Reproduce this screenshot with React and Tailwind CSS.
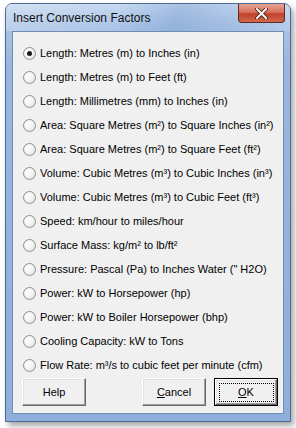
import React, { useState } from "react";

const options = [
  "Length: Metres (m) to Inches (in)",
  "Length: Metres (m) to Feet (ft)",
  "Length: Millimetres (mm) to Inches (in)",
  "Area: Square Metres (m²) to Square Inches (in²)",
  "Area: Square Metres (m²) to Square Feet (ft²)",
  "Volume: Cubic Metres (m³) to Cubic Inches (in³)",
  "Volume: Cubic Metres (m³) to Cubic Feet (ft³)",
  "Speed: km/hour to miles/hour",
  "Surface Mass: kg/m² to lb/ft²",
  "Pressure: Pascal (Pa) to Inches Water (\" H2O)",
  "Power: kW to Horsepower (hp)",
  "Power: kW to Boiler Horsepower (bhp)",
  "Cooling Capacity: kW to Tons",
  "Flow Rate: m³/s to cubic feet per minute (cfm)",
];

// classic style radio bullet
const Radio = ({ checked }) => (
  <span className="relative flex h-[13px] w-[13px] shrink-0 items-center justify-center rounded-full border border-[#8e8f8f] bg-[radial-gradient(circle_at_35%_35%,#ffffff_0%,#f4f4f4_45%,#d8d8d8_100%)]">
    {checked && <span className="h-[5px] w-[5px] rounded-full bg-[#1a1a1a]" />}
  </span>
);

// 3d classic push button
const Button = ({ children, isDefault }) => {
  const face = (
    <span className="flex h-full w-full items-center justify-center border border-b-[#696969] border-l-[#ffffff] border-r-[#696969] border-t-[#ffffff] bg-[#f0f0f0] shadow-[inset_-1px_-1px_0_#a0a0a0,inset_1px_1px_0_#e3e3e3]">
      {isDefault ? (
        <span className="flex h-[19px] w-[55px] items-center justify-center border border-dotted border-black">
          {children}
        </span>
      ) : (
        children
      )}
    </span>
  );
  return (
    <button
      className={`flex h-[28px] w-[64px] text-[11px] text-black ${
        isDefault ? "border border-black" : ""
      }`}
    >
      {face}
    </button>
  );
};

export default function App() {
  const [selected, setSelected] = useState(0);

  return (
    <div
      className="h-[428px] w-[296px] overflow-hidden bg-white pl-[5px] pt-[3px]"
      style={{ fontFamily: '"Liberation Sans", Arial, sans-serif' }}
    >
      <div className="flex h-[419px] w-[286px] flex-col rounded-t-[7px] border border-[#4b6a93] bg-[linear-gradient(180deg,#c3d7ef_0px,#a9c3e6_20px,#9ab6de_60px,#8eaedb_100%)] shadow-[3px_4px_6px_rgba(0,0,0,0.35)]">
        {/* title bar */}
        <div className="flex h-[27px] shrink-0 items-start justify-between bg-[linear-gradient(100deg,rgba(255,255,255,0.25)_0%,rgba(255,255,255,0.05)_40%,rgba(90,130,190,0.25)_60%,rgba(255,255,255,0.15)_100%)] pl-[7px] pr-[5px]">
          <span className="pt-[7px] text-[12px] leading-[14px] text-[#111]">
            Insert Conversion Factors
          </span>
          <div className="flex h-[19px] w-[47px] items-center justify-center rounded-b-[4px] border border-t-0 border-[#5d2a25] bg-[linear-gradient(#e8a493_0%,#d7725d_45%,#c2402a_55%,#d06a4f_100%)]">
            <svg width="13" height="11" viewBox="0 0 13 11">
              <path
                d="M2 1 L11 10 M11 1 L2 10"
                stroke="#3a1a14"
                strokeWidth="3.6"
                strokeLinecap="square"
              />
              <path
                d="M2 1 L11 10 M11 1 L2 10"
                stroke="#ffffff"
                strokeWidth="2"
                strokeLinecap="square"
              />
            </svg>
          </div>
        </div>

        {/* client area */}
        <div className="mx-[6px] mb-[7px] flex flex-1 flex-col border border-[#6f8cb2] bg-[#f0f0f0]">
          <div className="flex flex-col pl-[10px] pt-[9px]">
            {options.map((label, i) => (
              <label
                key={label}
                onClick={() => setSelected(i)}
                className="flex h-[24px] items-center gap-[4px] text-[11px] text-black"
              >
                <Radio checked={selected === i} />
                <span>{label}</span>
              </label>
            ))}
          </div>
          <div className="flex items-center pl-[9px] pt-[1px]">
            <Button>Help</Button>
            <div className="ml-[56px] flex gap-[8px]">
              <Button>
                <span>
                  <span className="underline">C</span>ancel
                </span>
              </Button>
              <Button isDefault>
                <span>
                  <span className="underline">O</span>K
                </span>
              </Button>
            </div>
          </div>
        </div>
      </div>
    </div>
  );
}
